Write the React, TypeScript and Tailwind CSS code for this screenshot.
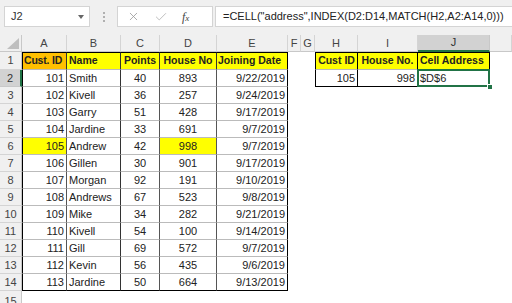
import React from 'react';
import { X, Check } from 'lucide-react';

type Row = [number, string, number, number, string];

const rows: Row[] = [
  [101, 'Smith', 40, 893, '9/22/2019'],
  [102, 'Kivell', 36, 257, '9/24/2019'],
  [103, 'Garry', 51, 428, '9/17/2019'],
  [104, 'Jardine', 33, 691, '9/7/2019'],
  [105, 'Andrew', 42, 998, '9/7/2019'],
  [106, 'Gillen', 30, 901, '9/17/2019'],
  [107, 'Morgan', 92, 191, '9/10/2019'],
  [108, 'Andrews', 67, 523, '9/8/2019'],
  [109, 'Mike', 34, 282, '9/21/2019'],
  [110, 'Kivell', 54, 100, '9/14/2019'],
  [111, 'Gill', 69, 572, '9/7/2019'],
  [112, 'Kevin', 56, 435, '9/6/2019'],
  [113, 'Jardine', 50, 664, '9/13/2019'],
];

const cols = ['A', 'B', 'C', 'D', 'E', 'F', 'G', 'H', 'I', 'J', ''];

const App: React.FC = () => {
  const font = { fontFamily: '"Liberation Sans", Arial, sans-serif' };

  return (
    <div className="w-[512px] h-[303px] overflow-hidden bg-white text-[11px] text-[#222] whitespace-nowrap" style={font}>
      {/* Formula bar */}
      <div className="h-[35px] bg-[#f0f0f0] flex items-start pt-[6px]">
        <div className="ml-[4px] w-[86px] h-[21px] bg-white border border-[#d4d4d4] flex items-center justify-between pl-[6px] pr-[5px] text-[#333]">
          <span>J2</span>
          <span className="w-0 h-0 border-l-[3px] border-r-[3px] border-t-[4px] border-l-transparent border-r-transparent border-t-[#666]"></span>
        </div>
        <div className="w-[27px] h-[21px] flex flex-col items-center justify-center gap-[2px]">
          <span className="w-[2px] h-[2px] bg-[#b0b0b0]"></span>
          <span className="w-[2px] h-[2px] bg-[#b0b0b0]"></span>
          <span className="w-[2px] h-[2px] bg-[#b0b0b0]"></span>
        </div>
        <div className="w-[96px] h-[21px] bg-white border border-[#d4d4d4] flex items-center pl-[9px] gap-[14px]">
          <X size={13} strokeWidth={1.5} className="text-[#9a9a9a]" />
          <Check size={14} strokeWidth={1.5} className="text-[#b5b5b5]" />
          <span className="text-[12px] italic text-[#444]" style={{ fontFamily: '"Liberation Serif", serif' }}>
            f<span className="text-[9px]">x</span>
          </span>
        </div>
        <div className="ml-[2px] flex-1 h-[21px] bg-white border border-r-0 border-[#d4d4d4] flex items-center pl-[7px] text-[#222]">
          =CELL("address",INDEX(D2:D14,MATCH(H2,A2:A14,0)))
        </div>
      </div>

      {/* Sheet */}
      <div className="grid grid-cols-[22px_45px_54px_39px_57px_71px_13px_14px_43px_60px_72px_1fr] grid-rows-[17px_18px_repeat(14,17px)]">
        {/* column headers */}
        <div className="bg-[#f0f0f0] border-r border-b border-[#c8c8c8] relative">
          <svg width="22" height="17" className="absolute inset-0">
            <polygon points="7,14 19,14 19,3" fill="#bfbfbf" />
          </svg>
        </div>
        {cols.map((c, i) => (
          <div
            key={c + i}
            className={
              c === 'J'
                ? 'bg-[#d2d2d2] border-r border-[#c8c8c8] border-b-2 border-b-[#217346] flex items-center justify-center text-[#333]'
                : 'bg-[#f0f0f0] border-r border-b border-[#d4d4d4] border-b-[#c8c8c8] flex items-center justify-center text-[#444]'
            }
          >
            {c}
          </div>
        ))}

        {/* row 1 */}
        <div className="bg-[#f0f0f0] border-r border-b border-[#d4d4d4] border-r-[#c8c8c8] flex items-center justify-center text-[#444]">1</div>
        <div className="bg-[#ffc000] border border-r-[#333] border-b-[#bbb] border-black font-bold text-[10.5px] tracking-[-0.2px] flex items-center pl-[1px] overflow-hidden">Cust. ID</div>
        <div className="bg-[#ffff00] border-t border-r border-b border-black border-r-[#333] border-b-[#bbb] font-bold text-[10.5px] flex items-center pl-[2px]">Name</div>
        <div className="bg-[#ffff00] border-t border-r border-b border-black border-r-[#333] border-b-[#bbb] font-bold text-[10.5px] flex items-center justify-center">Points</div>
        <div className="bg-[#ffff00] border-t border-r border-b border-black border-r-[#333] border-b-[#bbb] font-bold text-[10.5px] flex items-center justify-center">House No</div>
        <div className="bg-[#ffff00] border-t border-r border-b border-black border-b-[#bbb] font-bold text-[10.5px] flex items-center pl-[1px]">Joining Date</div>
        <div></div>
        <div></div>
        <div className="bg-[#ffff00] border border-black border-b-[#bbb] font-bold text-[10.5px] flex items-center justify-center">Cust ID</div>
        <div className="bg-[#ffff00] border-t border-r border-b border-black border-b-[#bbb] font-bold text-[10.5px] flex items-center justify-center">House No.</div>
        <div className="bg-[#ffff00] border-t border-r border-b border-black border-b-[#bbb] font-bold text-[10.5px] flex items-center pl-[2px]">Cell Address</div>
        <div></div>

        {/* data rows */}
        {rows.map((r, i) => {
          const n = i + 2;
          const last = i === rows.length - 1;
          const bottom = last ? 'border-b-black' : 'border-b-[#bbb]';
          const hl = r[0] === 105;
          return (
            <React.Fragment key={n}>
              <div
                className={
                  n === 2
                    ? 'bg-[#d2d2d2] border-b border-b-[#c8c8c8] border-r-2 border-r-[#217346] flex items-center justify-center text-[#333]'
                    : 'bg-[#f0f0f0] border-r border-b border-[#d4d4d4] border-r-[#c8c8c8] flex items-center justify-center text-[#444]'
                }
              >
                {n}
              </div>
              <div className={`${hl ? 'bg-[#ffff00]' : 'bg-white'} border-l border-r border-b border-black border-r-[#555] ${bottom} flex items-center justify-end pr-[2px]`}>{r[0]}</div>
              <div className={`border-r border-b border-black border-r-[#333] ${bottom} flex items-center pl-[2px]`}>{r[1]}</div>
              <div className={`border-r border-b border-black border-r-[#555] ${bottom} flex items-center justify-center`}>{r[2]}</div>
              <div className={`${hl ? 'bg-[#ffff00]' : 'bg-white'} border-r border-b border-black border-r-[#555] ${bottom} flex items-center justify-center`}>{r[3]}</div>
              <div className={`border-r border-b border-black ${bottom} flex items-center justify-end pr-[2px]`}>{r[4]}</div>
              <div></div>
              <div></div>
              {n === 2 ? (
                <>
                  <div className="border-l border-r border-b border-black flex items-center justify-end pr-[2px]">105</div>
                  <div className="border-r border-b border-black flex items-center justify-end pr-[2px]">998</div>
                  <div className="border-r border-b border-black flex items-center pl-[2px] relative">
                    $D$6
                    <div className="absolute -left-[1px] -top-[1px] -right-[1px] -bottom-[1px] border-2 border-[#217346]"></div>
                    <div className="absolute -right-[4px] -bottom-[4px] w-[6px] h-[6px] bg-[#217346] border border-white"></div>
                  </div>
                </>
              ) : (
                <>
                  <div></div>
                  <div></div>
                  <div></div>
                </>
              )}
              <div></div>
            </React.Fragment>
          );
        })}

        {/* row 15 */}
        <div className="bg-[#f0f0f0] border-r border-b border-[#d4d4d4] border-r-[#c8c8c8] flex items-start justify-center pt-[2px] text-[#444]">15</div>
      </div>
    </div>
  );
};

export default App;
